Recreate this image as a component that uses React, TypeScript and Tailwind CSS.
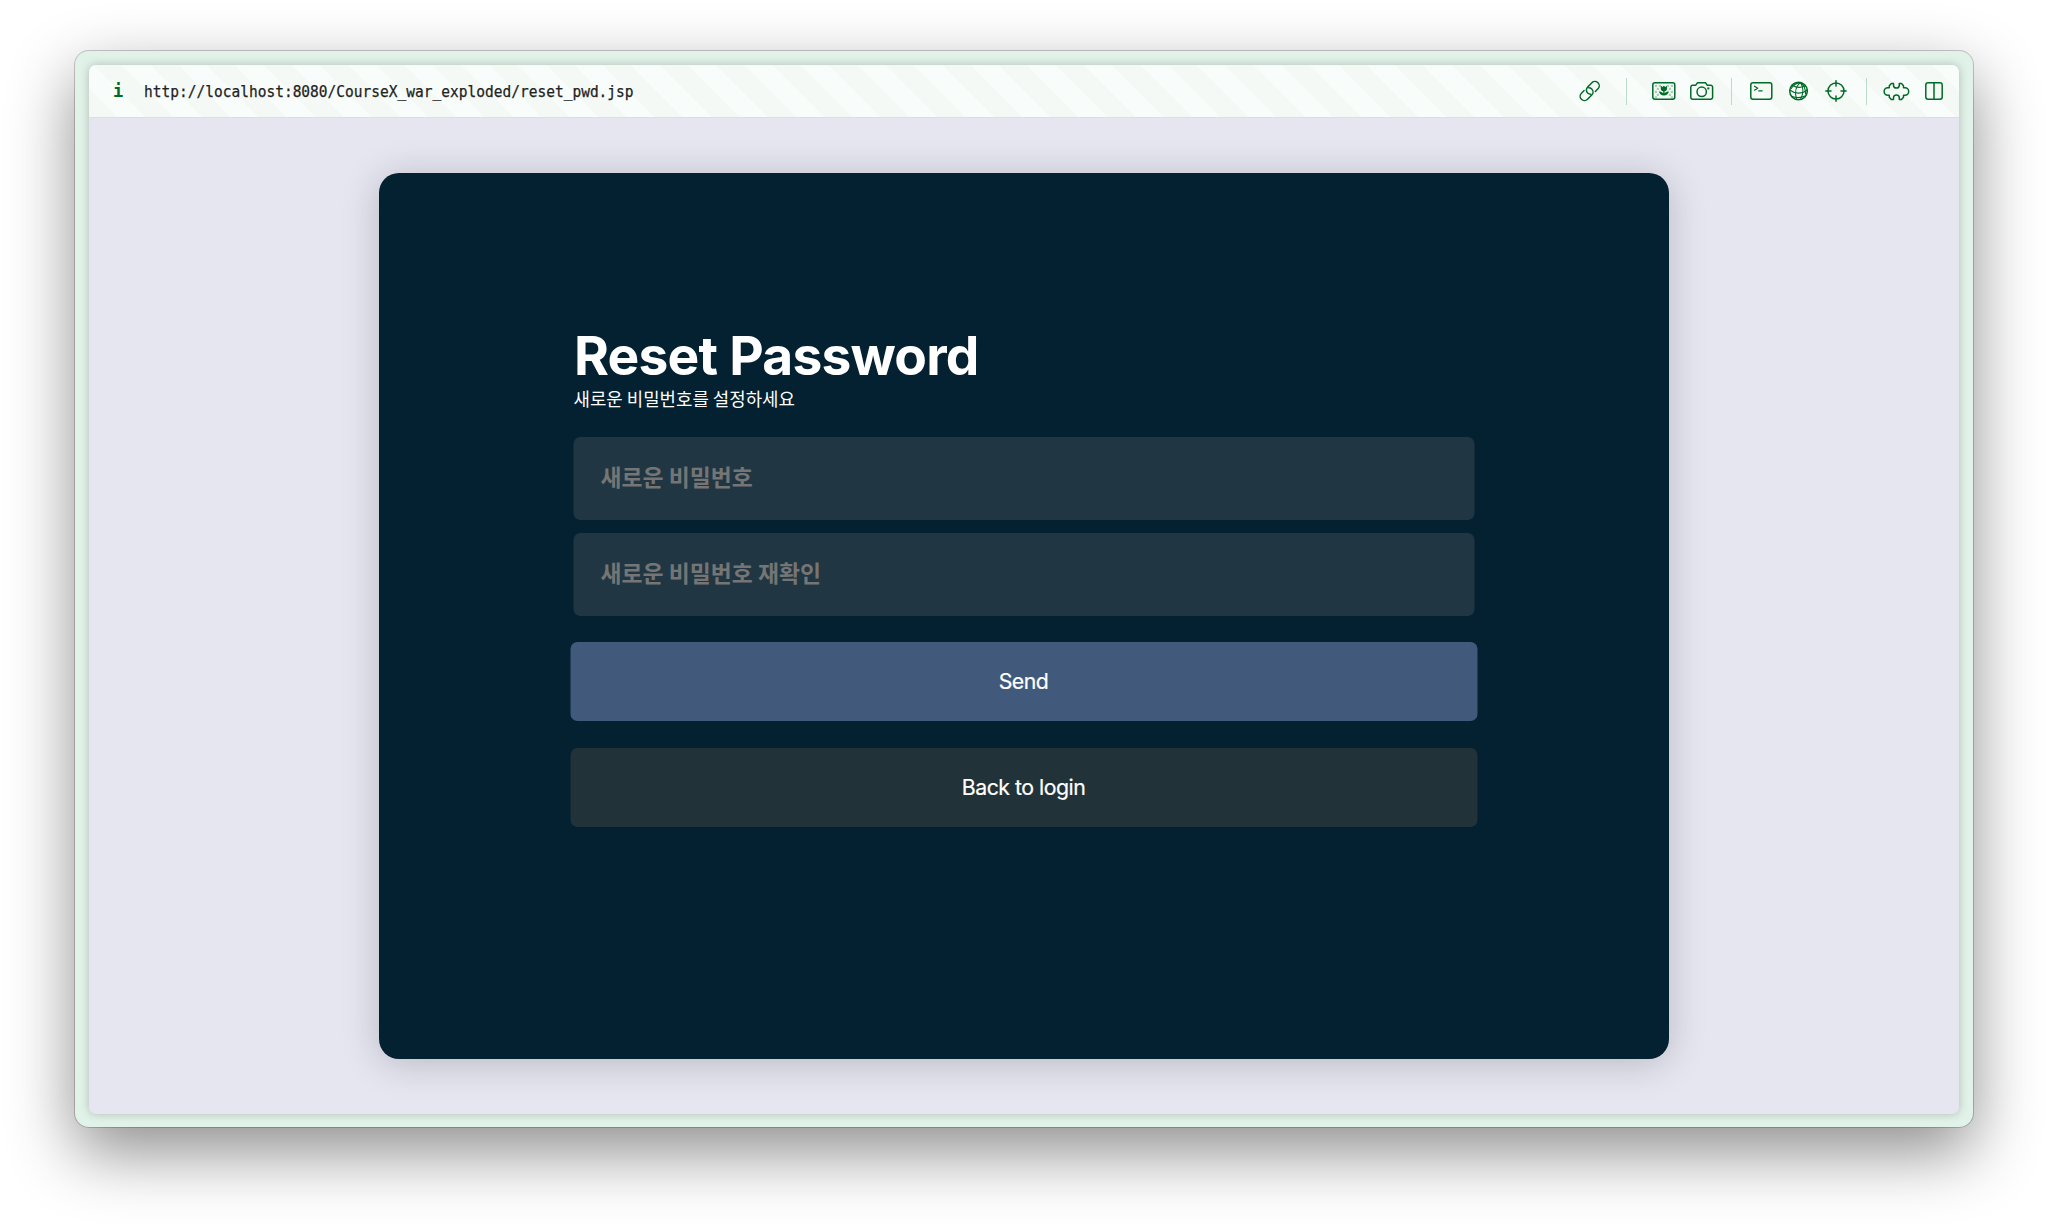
import type { ReactNode } from "react";

function Icon({ w, h, children, className = "" }: { w: number; h: number; children: ReactNode; className?: string }) {
  return (
    <svg
      width={w}
      height={h}
      viewBox={`0 0 ${w} ${h}`}
      fill="none"
      stroke="currentColor"
      strokeWidth={1.5}
      strokeLinecap="round"
      strokeLinejoin="round"
      className={`shrink-0 ${className}`}
    >
      {children}
    </svg>
  );
}

function Separator({ className = "w-px" }: { className?: string }) {
  return <div className={`h-[27px] shrink-0 bg-[#b9dccb] ${className}`} />;
}

const CHECKER = [
  [4, 4], [8, 4], [16, 4], [20, 4],
  [6, 7], [18, 7],
  [4, 10], [8, 10], [16, 10], [20, 10],
  [6, 13], [18, 13],
  [4, 15.5], [20, 15.5],
];

function Toolbar() {
  return (
    <div className="flex h-[53px] shrink-0 items-center border-b border-[#d8e2dc] bg-[repeating-linear-gradient(45deg,#f4f9f5_0_20px,#f8fcfb_20px_40px)] text-[#006b26]">
      <div className="ml-[24px] w-[31px] pt-px font-['DejaVu_Sans_Mono',monospace] text-[17px] font-bold leading-none">i</div>
      <div className="w-[490px] origin-left scale-x-[0.922] whitespace-nowrap pt-px font-['DejaVu_Sans_Mono',monospace] text-[15.76px] leading-none text-[#222] [-webkit-text-stroke:0.25px_#222]">
        http://localhost:8080/CourseX_war_exploded/reset_pwd.jsp
      </div>
      <div className="ml-auto flex items-center">
        <Icon w={22} h={22}>
          <g transform="translate(10.700 11) rotate(-45)">
            <path d="M-3.600 -4.300H-7.400a4.300 4.300 0 0 0 0 8.600h6a4.300 4.300 0 0 0 4.300 -4.300a4.300 4.300 0 0 0 -1.300 -3" />
            <path d="M3.600 4.300H7.400a4.300 4.300 0 0 0 0 -8.600h-6a4.300 4.300 0 0 0 -4.300 4.300a4.300 4.300 0 0 0 1.300 3" />
          </g>
        </Icon>
        <Separator className="ml-[25px] w-[1.500px]" />
        <Icon w={24} h={18} className="ml-[25px]">
          <rect x="0.800" y="0.800" width="22" height="16.400" rx="2.200" />
          <g fill="currentColor" stroke="none" opacity="0.300">
            {CHECKER.map(([x, y]) => (
              <rect key={`${x}-${y}`} x={x - 1.200} y={y - 1.200} width="2.200" height="2.200" />
            ))}
          </g>
          <path
            d="M8.800 3.800l1.700 1.100L11.900 3.700l1.400 1.200L15 3.800v3.200c0 1.300-.9 2-2.400 2.200v2.300c.6-1 1.900-1.800 4-1.700-.4 2.400-2 3.600-4.700 3.600s-4.300-1.200-4.700-3.600c2-.1 3.400.7 4 1.700V9.200C9.700 9 8.800 8.300 8.800 7z"
            fill="currentColor"
            stroke="none"
          />
        </Icon>
        <Icon w={24} h={18} className="ml-[13.500px] mr-[0.500px]">
          <path d="M2.800 3.200h3l1.600-2.400h8.200l1.600 2.400h3.400a2 2 0 0 1 2 2v10a2 2 0 0 1-2 2H2.800a2 2 0 0 1-2-2v-10a2 2 0 0 1 2-2z" />
          <circle cx="11.700" cy="9.800" r="4.700" />
          <rect x="17.300" y="5.400" width="2" height="2" fill="currentColor" stroke="none" />
        </Icon>
        <Separator className="ml-[17px] w-px" />
        <Icon w={24} h={18} className="ml-[18px]">
          <rect x="0.800" y="0.800" width="21" height="16.400" rx="2.200" />
          <path d="M4.500 4.200l3.200 2-3.200 2M8.700 8.800h3.500" strokeWidth="1.200" />
        </Icon>
        <Icon w={20} h={20} className="ml-[14px]">
          <g strokeWidth="1.100">
            <circle cx="10.500" cy="10" r="8.800" strokeWidth="1.500" />
            <path d="M12.500 1.400C8 5 6.500 11.500 8.500 18.500M12.500 1.400c2.800 4.500 3.100 11 0 17M12.500 1.400C8.500 2 4.800 4.500 3.300 7.500M12.500 1.400c3 1.500 4.800 5 5.100 11.500" />
            <path d="M4.300 4.200c4 2.600 9 2.600 13.200.5M1.800 9c5 4 12 4.200 17.200.2M3.700 15.200c4 1.700 9.500 1.600 13.400-.1" />
          </g>
        </Icon>
        <Icon w={22} h={22} className="ml-[17px]">
          <circle cx="11" cy="11" r="8" />
          <path d="M11 0.800v5.200M11 16v5.200M0.800 11h5.200M16 11h5.200" />
        </Icon>
        <Separator className="ml-[19px] w-px" />
        <Icon w={27} h={19} className="ml-[16px]">
          <path d="M6.300 5V3.800L8.300 1.600h2.200v1.600a2.900 2.900 0 0 0 5.800 0V1.600h2.200l2 2.200V5.800h1.500a3.700 3.700 0 0 1 0 7.400h-1.500v2l-2 2.200h-2.200v-1.600a2.900 2.900 0 0 0-5.800 0v1.600H8.300l-2-2.200v-2H4.800a3.700 3.700 0 0 1 0-7.400h1.500z" />
        </Icon>
        <Icon w={18} h={18} className="ml-[14.500px] mr-[16.500px]">
          <rect x="0.800" y="0.800" width="16.400" height="16.400" rx="2.200" />
          <path d="M9 1v16" />
        </Icon>
      </div>
    </div>
  );
}

function PasswordField({ placeholder, className = "" }: { placeholder: string; className?: string }) {
  return (
    <input
      type="password"
      placeholder={placeholder}
      className={`mr-[3px] ml-[3.500px] block h-[83px] rounded-[7px] bg-[#203743] px-[27px] pb-[4px] font-['Noto_Sans_CJK_KR',sans-serif] text-[22.850px] font-bold text-white outline-none placeholder:text-[#757575] ${className}`}
    />
  );
}

export default function App() {
  return (
    <div className="flex h-[1227px] w-[2048px] overflow-hidden bg-white px-[75px] pt-[51px] font-['Inter',sans-serif]">
      <div className="h-[1076px] w-[1898px] rounded-[14px] bg-[#e1f2e8] p-[14px] shadow-[0_0_0_1px_rgba(0,0,0,0.2),0_25px_66px_rgba(0,0,0,0.45)]">
        <div className="flex h-[1049px] w-full flex-col overflow-hidden rounded-[7px] bg-[#e5e6f0] shadow-[0_0_10px_rgba(0,0,0,0.22)]">
          <Toolbar />
          <main className="flex flex-1 justify-center pt-[54.500px]">
            <section className="h-[886.500px] w-[1290px] rounded-[20px] bg-[#032131] shadow-[0_4px_38px_rgba(0,0,0,0.2)]">
              <form className="mx-auto flex w-[907px] -translate-x-[0.500px] flex-col pt-[151px]">
                <h1 className="mx-[4px] text-[53.300px] font-bold leading-[64px] tracking-[-0.780px] text-white">Reset Password</h1>
                <p className="mx-[3.500px] -mt-px font-['Noto_Sans_CJK_KR',sans-serif] text-[17.850px] leading-[22px] text-white">
                  새로운 비밀번호를 설정하세요
                </p>
                <PasswordField placeholder="새로운 비밀번호" className="mt-[28px]" />
                <PasswordField placeholder="새로운 비밀번호 재확인" className="mt-[13px]" />
                <button type="button" className="mt-[26.500px] h-[79px] rounded-[7px] bg-[#415a7b] text-[21.300px] tracking-[-0.500px] text-white [-webkit-text-stroke:0.200px_white]">
                  Send
                </button>
                <button type="button" className="mt-[27px] h-[79px] rounded-[7px] bg-[#223239] text-[21.300px] tracking-[-0.500px] text-white [-webkit-text-stroke:0.200px_white]">
                  Back to login
                </button>
              </form>
            </section>
          </main>
        </div>
      </div>
    </div>
  );
}
